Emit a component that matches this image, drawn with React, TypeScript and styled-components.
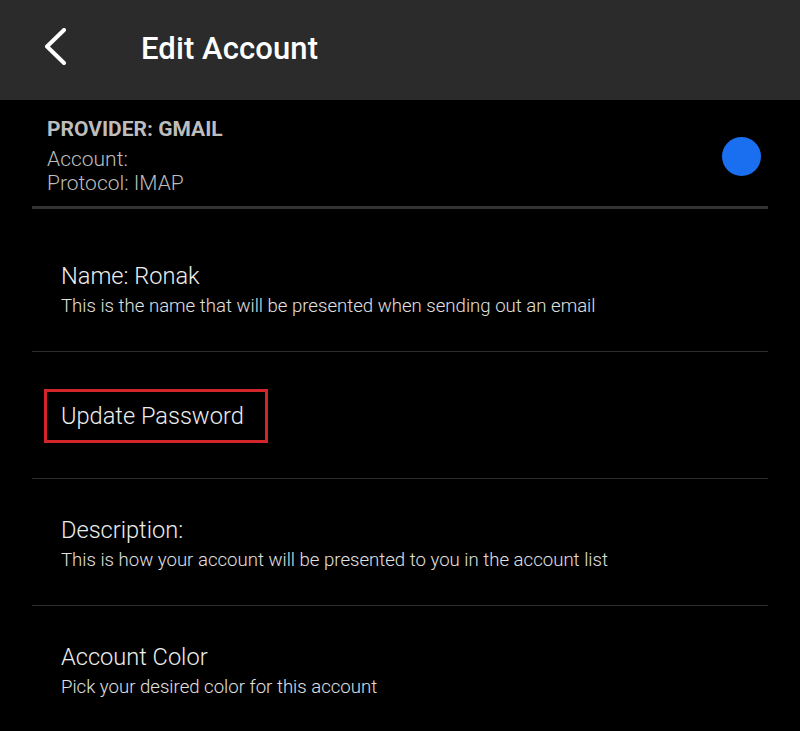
import React from "react";
import styled, { createGlobalStyle } from "styled-components";

const GlobalStyle = createGlobalStyle`
  html, body {
    margin: 0;
    padding: 0;
    background: #000;
  }
  body {
    font-family: Roboto, "Noto Sans", "Liberation Sans", sans-serif;
    -webkit-font-smoothing: antialiased;
  }
`;

const Page = styled.div`
  width: 800px;
  min-height: 731px;
  background: #000;
  overflow: hidden;
`;

const Header = styled.header`
  height: 100px;
  box-sizing: border-box;
  padding: 0 0 4px 41px;
  background: #2b2b2b;
  display: flex;
  align-items: center;
  gap: 72px;
`;

const BackButton = styled.button`
  display: flex;
  padding: 0;
  border: 0;
  background: none;
  cursor: pointer;
`;

const Title = styled.h1`
  margin: 0;
  font-size: 31px;
  font-weight: 500;
  color: #fff;
  letter-spacing: 0.1px;
`;

const ProviderBlock = styled.section`
  display: flex;
  align-items: center;
  justify-content: space-between;
  padding: 17px 39px 11px 47px;
`;

const ProviderInfo = styled.div`
  display: flex;
  flex-direction: column;
  font-size: 21px;
  line-height: 24px;
  color: #bdbdbd;
  font-weight: 300;
`;

const ProviderName = styled.div`
  font-weight: 700;
  font-size: 21px;
  margin-bottom: 6px;
`;

const ColorDot = styled.span<{ $color: string }>`
  width: 39px;
  height: 39px;
  border-radius: 50%;
  background: ${(p) => p.$color};
`;

const Divider = styled.hr<{ $thick?: boolean }>`
  margin: 0 32px;
  border: 0;
  height: ${(p) => (p.$thick ? "3px" : "1px")};
  background: ${(p) => (p.$thick ? "#333" : "#2c2c2c")};
`;

const SettingRow = styled.div<{ $first?: boolean }>`
  height: 126px;
  margin-top: ${(p) => (p.$first ? "16px" : "0")};
  box-sizing: border-box;
  padding: 6px 0 0 61px;
  display: flex;
  flex-direction: column;
  justify-content: center;
  cursor: pointer;
`;

const RowTitle = styled.div`
  font-size: 23.6px;
  line-height: 28px;
  font-weight: 300;
  color: #ededed;
`;

const RowHint = styled.div`
  margin-top: 3px;
  font-size: 18.6px;
  line-height: 27px;
  font-weight: 300;
  color: #e0e0e0;
`;

const Highlight = styled.span`
  align-self: flex-start;
  margin: -5px 0 0 -17px;
  padding: 10px 21px 10px 14px;
  border: 3px solid #d3262b;
`;

const App: React.FC = () => {
  return (
    <Page>
      <GlobalStyle />
      <Header>
        <BackButton aria-label="Back">
          <svg width="28" height="40" viewBox="0 0 28 40" fill="none">
            <path
              d="M23 2 L6 18.5 L23 35"
              stroke="#fff"
              strokeWidth="4"
              strokeLinecap="round"
              strokeLinejoin="round"
            />
          </svg>
        </BackButton>
        <Title>Edit Account</Title>
      </Header>

      <ProviderBlock>
        <ProviderInfo>
          <ProviderName>PROVIDER: GMAIL</ProviderName>
          <div>Account:</div>
          <div>Protocol: IMAP</div>
        </ProviderInfo>
        <ColorDot $color="#1a6ef0" />
      </ProviderBlock>
      <Divider $thick />

      <SettingRow $first>
        <RowTitle>Name: Ronak</RowTitle>
        <RowHint>This is the name that will be presented when sending out an email</RowHint>
      </SettingRow>
      <Divider />

      <SettingRow>
        <RowTitle as={Highlight}>Update Password</RowTitle>
      </SettingRow>
      <Divider />

      <SettingRow>
        <RowTitle>Description:</RowTitle>
        <RowHint>This is how your account will be presented to you in the account list</RowHint>
      </SettingRow>
      <Divider />

      <SettingRow>
        <RowTitle>Account Color</RowTitle>
        <RowHint>Pick your desired color for this account</RowHint>
      </SettingRow>
    </Page>
  );
};

export default App;
